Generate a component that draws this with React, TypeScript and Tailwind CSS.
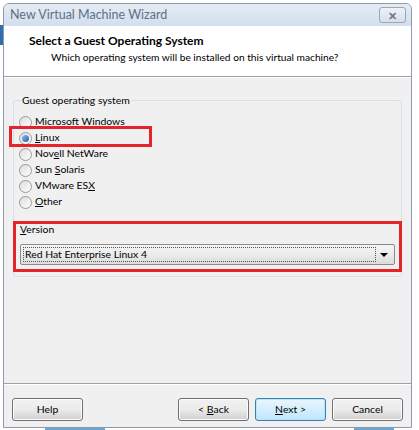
import React from "react";

const font = { fontFamily: 'Lato, "Liberation Sans", sans-serif' };

function Radio({ label, checked }: { label: React.ReactNode; checked?: boolean }) {
  return (
    <div className="flex h-4 items-center gap-[3px]">
      <span className="flex h-[13px] w-[13px] items-center justify-center rounded-full border border-[#9a9a9a] bg-gradient-to-br from-[#dcdcdc] to-[#ffffff]">
        {checked && (
          <span className="h-[7px] w-[7px] rounded-full bg-gradient-to-br from-[#8ec3f0] to-[#1f5fa3]" />
        )}
      </span>
      <span className="text-[10.4px] text-black">{label}</span>
    </div>
  );
}

function Btn({ children, primary }: { children: React.ReactNode; primary?: boolean }) {
  return (
    <div
      className={
        "flex h-[23px] w-[71px] items-center justify-center rounded-[3px] border text-[10.4px] text-black " +
        (primary
          ? "border-[#3c7fb1] bg-gradient-to-b from-[#eaf6fd] to-[#bee6fd] shadow-[inset_0_0_0_1px_#b9e5fb]"
          : "border-[#707070] bg-gradient-to-b from-[#f2f2f2] via-[#ebebeb] to-[#cfcfcf] shadow-[inset_0_0_0_1px_#fcfcfc]")
      }
    >
      {children}
    </div>
  );
}

export default function App() {
  return (
    <div className="relative h-[430px] w-[419px] overflow-hidden bg-white" style={font}>
      {/* bits of desktop behind */}
      <div className="absolute left-0 top-[25px] h-[20px] w-[3px] bg-[#2f6fb0]" />
      <div className="absolute bottom-0 left-[45px] h-[2px] w-[60px] bg-[#6aa6d6]" />
      <div className="absolute bottom-0 right-[25px] h-[2px] w-[40px] bg-[#6aa6d6]" />

      <div className="ml-[3px] mt-[3px] flex h-[425px] w-[409px] flex-col overflow-hidden rounded-t-[6px] border border-[#8c9aab] bg-[#f0f0f0]">
        {/* title bar */}
        <div className="flex h-[22px] shrink-0 items-center justify-between bg-gradient-to-b from-[#e3ebf5] to-[#d3dfee] pl-[6px] pr-[5px]">
          <span className="text-[12.5px] text-[#5f7082]">New Virtual Machine Wizard</span>
          <div className="flex h-[16px] w-[27px] items-center justify-center rounded-[3px] border border-[#9aa6b4] bg-gradient-to-b from-[#eef2f7] to-[#d7e0eb] text-[11px] font-bold leading-none text-[#6b7889]">
            ✕
          </div>
        </div>

        {/* header */}
        <div className="flex h-[50px] shrink-0 flex-col bg-white pl-[25px] pt-[7px]">
          <div className="text-[12px] font-bold leading-[16px] text-black">Select a Guest Operating System</div>
          <div className="pl-[22px] text-[10.2px] leading-[16px] text-black">
            Which operating system will be installed on this virtual machine?
          </div>
        </div>
        <div className="h-px shrink-0 bg-[#a0a0a0]" />
        <div className="h-px shrink-0 bg-white" />

        {/* body */}
        <div className="flex flex-1 flex-col px-[9px] pt-[15px]">
          <fieldset className="relative rounded-[3px] border border-[#d5dfe5] px-[5px] pb-[4px]">
            <legend className="ml-[2px] px-[1px] text-[10.4px] leading-[14px] text-black">Guest operating system</legend>
            <div className="mt-[7px] flex flex-col">
              <Radio label={<>Microsoft <u>W</u>indows</>} />
              <div className="relative">
                <Radio checked label={<><u>L</u>inux</>} />
                <div className="pointer-events-none absolute left-[-10px] top-[-4px] h-[21px] w-[143px] border-[3px] border-[#e3242b]" />
              </div>
              <Radio label={<>Nov<u>e</u>ll NetWare</>} />
              <Radio label={<>Sun <u>S</u>olaris</>} />
              <Radio label={<>VMware ES<u>X</u></>} />
              <Radio label={<><u>O</u>ther</>} />
            </div>

            <div className="mx-[-6px] mt-[11px] flex flex-col border-[3px] border-[#e3242b] px-[4px] pb-[4px]">
              <div className="text-[10.4px] leading-[10px] text-black">
                <u>V</u>ersion
              </div>
              <div className="mt-[10px] flex h-[21px] items-center rounded-[2px] border border-[#8a8a8a] bg-gradient-to-b from-[#f4f4f4] via-[#ececec] to-[#dcdcdc] pl-[2px] pr-[2px]">
                <div className="flex h-[15px] flex-1 items-center border border-dotted border-[#555] pl-[1px] text-[10.4px] text-black">
                  Red Hat Enterprise Linux 4
                </div>
                <div className="flex h-full w-[16px] items-center justify-center">
                  <span className="h-0 w-0 border-x-[4px] border-t-[4px] border-x-transparent border-t-black" />
                </div>
              </div>
            </div>
          </fieldset>
        </div>

        {/* footer */}
        <div className="h-px shrink-0 bg-[#a0a0a0]" />
        <div className="h-px shrink-0 bg-white" />
        <div className="flex h-[42px] shrink-0 items-start px-[8px] pt-[13px]">
          <Btn>Help</Btn>
          <div className="flex-1" />
          <div className="flex gap-[6px]">
            <Btn>
              {"<\u00a0"}
              <u>B</u>ack
            </Btn>
            <Btn primary>
              <u>N</u>ext{"\u00a0>"}
            </Btn>
            <Btn>Cancel</Btn>
          </div>
        </div>
      </div>
    </div>
  );
}
